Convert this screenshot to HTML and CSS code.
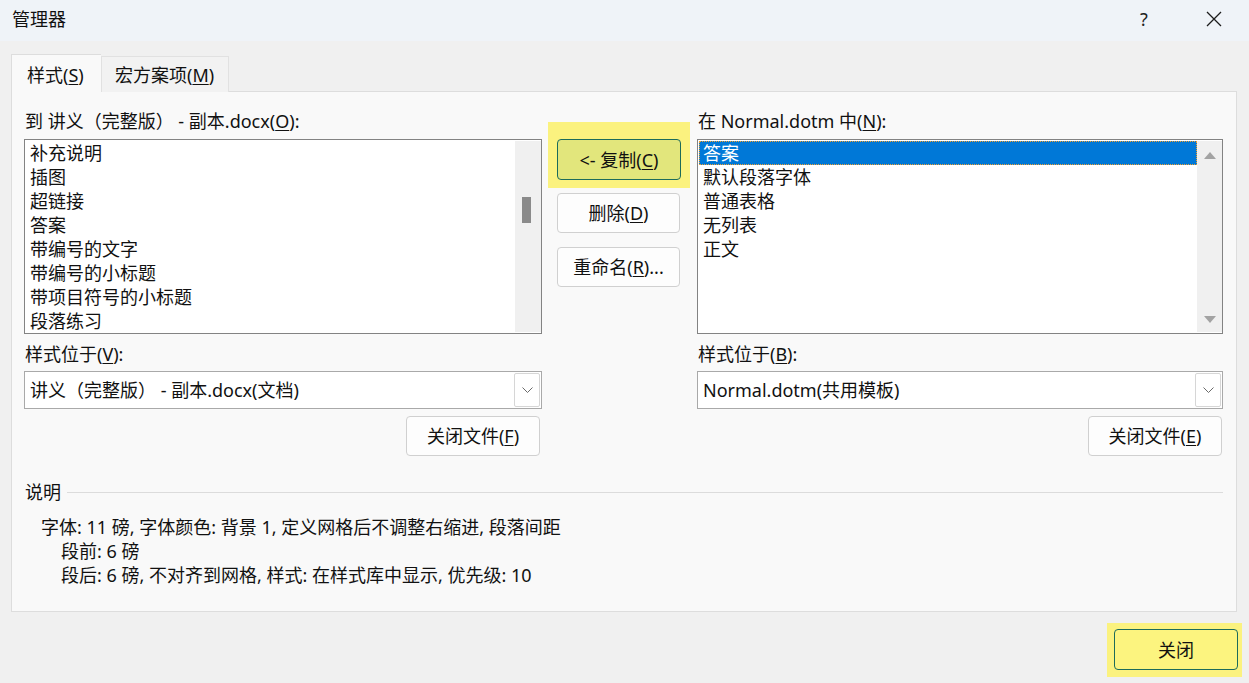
FILE: index.html
```html
<!DOCTYPE html>
<html lang="zh-CN">
<head>
  <meta charset="UTF-8" />
  <title>管理器</title>
  <link rel="stylesheet" href="styles.css">
</head>
<body>
  <div class="window">
    <!-- title bar -->
    <div class="titlebar">
      <span class="title">管理器</span>
      <span class="help">?</span>
      <span class="close-x">
        <svg width="16" height="16" viewBox="0 0 16 16"><path d="M1 1 L15 15 M15 1 L1 15" stroke="#1c1c1c" stroke-width="1.3" fill="none"/></svg>
      </span>
    </div>

    <div class="content">
      <div class="tabs">
        <div class="tab active">样式(<u>S</u>)</div>
        <div class="tab">宏方案项(<u>M</u>)</div>
      </div>

      <div class="panel">
        <div class="columns">
          <!-- left side -->
          <div class="col side-left">
            <div class="label">到 讲义（完整版） - 副本.docx(<u>O</u>):</div>
            <div class="listbox">
              <ul class="items">
                <li>补充说明</li>
                <li>插图</li>
                <li>超链接</li>
                <li>答案</li>
                <li>带编号的文字</li>
                <li>带编号的小标题</li>
                <li>带项目符号的小标题</li>
                <li>段落练习</li>
              </ul>
              <div class="vscroll">
                <div class="thumb"></div>
              </div>
            </div>
            <div class="label sub">样式位于(<u>V</u>):</div>
            <div class="combo">
              <span class="combo-text">讲义（完整版） - 副本.docx(文档)</span>
              <span class="combo-btn"><svg width="11" height="6" viewBox="0 0 11 6"><path d="M0.5 0.5 L5.5 5.5 L10.5 0.5" stroke="#6a6a6a" stroke-width="1" fill="none"/></svg></span>
            </div>
            <div class="btn-row">
              <button class="btn file-btn">关闭文件(<u>F</u>)</button>
            </div>
          </div>

          <!-- middle buttons -->
          <div class="col mid">
            <div class="hl hl-copy">
              <button class="btn marked copy-btn">&lt;- 复制(<u>C</u>)</button>
            </div>
            <button class="btn mid-btn del-btn">删除(<u>D</u>)</button>
            <button class="btn mid-btn">重命名(<u>R</u>)...</button>
          </div>

          <!-- right side -->
          <div class="col side-right">
            <div class="label">在 Normal.dotm 中(<u>N</u>):</div>
            <div class="listbox">
              <ul class="items">
                <li class="selected">答案</li>
                <li>默认段落字体</li>
                <li>普通表格</li>
                <li>无列表</li>
                <li>正文</li>
              </ul>
              <div class="vscroll arrows">
                <span class="arrow-up"></span>
                <span class="arrow-down"></span>
              </div>
            </div>
            <div class="label sub">样式位于(<u>B</u>):</div>
            <div class="combo">
              <span class="combo-text">Normal.dotm(共用模板)</span>
              <span class="combo-btn"><svg width="11" height="6" viewBox="0 0 11 6"><path d="M0.5 0.5 L5.5 5.5 L10.5 0.5" stroke="#6a6a6a" stroke-width="1" fill="none"/></svg></span>
            </div>
            <div class="btn-row">
              <button class="btn file-btn">关闭文件(<u>E</u>)</button>
            </div>
          </div>
        </div>

        <div class="desc-head">
          <span>说明</span>
          <span class="rule"></span>
        </div>
        <div class="desc">
          <div>字体: 11 磅, 字体颜色: 背景 1, 定义网格后不调整右缩进, 段落间距</div>
          <div class="indent">段前: 6 磅</div>
          <div class="indent">段后: 6 磅, 不对齐到网格, 样式: 在样式库中显示, 优先级: 10</div>
        </div>
      </div>

      <div class="footer">
        <div class="hl hl-close">
          <button class="btn marked close-btn">关闭</button>
        </div>
      </div>
    </div>
  </div>
</body>
</html>
```

FILE: styles.css
```css
* { margin: 0; padding: 0; box-sizing: border-box; }
html, body {
  background: #f0f0f0;
  font-family: "Noto Sans", "Noto Sans CJK SC", sans-serif;
  font-size: 18px;
  color: #111;
  overflow: hidden;
}
u { text-decoration: underline; text-underline-offset: 2px; text-decoration-thickness: 1px; }

.window {
  width: 1249px;
  height: 683px;
  background: #f0f0f0;
}

/* Title bar */
.titlebar {
  height: 41px;
  background: #eff3f8;
  display: flex;
  align-items: center;
  padding-left: 12px;
  line-height: 24px;
}
.title { flex: 1; margin-top: -3px; }
.help {
  width: 20px;
  text-align: center;
  margin-right: 52px;
  margin-top: -3px;
  font-size: 18px;
  color: #222;
}
.close-x {
  width: 16px;
  height: 16px;
  margin-right: 27px;
  margin-top: -3px;
  display: flex;
}

.content { padding: 13px 11px 0; }

/* Tabs */
.tabs {
  display: flex;
  align-items: flex-end;
  height: 38px;
  margin-bottom: -1px;
  position: relative;
  z-index: 1;
}
.tab {
  height: 36px;
  line-height: 36px;
  padding: 0 13px;
  width: 128px;
  border: 1px solid #e1e1e1;
  border-bottom: none;
  background: #f2f2f2;
}
.tab.active {
  height: 38px;
  line-height: 40px;
  width: 90px;
  padding: 0 15px;
  background: #f9f9f9;
  border-color: #dddddd;
  border-right: none;
}

/* Panel */
.panel {
  width: 1226px;
  height: 521px;
  background: #f9f9f9;
  border: 1px solid #dddddd;
  padding: 0 13px 0 12px;
}
.columns { display: flex; }
.col { display: flex; flex-direction: column; }
.side-left { width: 518px; padding-top: 17px; }
.side-right { width: 526px; padding-top: 17px; }
.mid { width: 123px; margin: 0 17px 0 15px; padding-top: 47px; }

.label { height: 24px; line-height: 24px; margin-left: 1px; }
.label.sub { margin-top: 8px; }

.listbox {
  margin-top: 6px;
  height: 195px;
  border: 1px solid #838383;
  background: #fff;
  display: flex;
}
.items {
  list-style: none;
  flex: 1;
  padding: 1px 0 0 1px;
  overflow: hidden;
}
.items li {
  height: 24px;
  line-height: 24px;
  padding-left: 4px;
  white-space: nowrap;
}
.items li.selected {
  background: #0078d7;
  color: #fff;
  outline: 1px dotted #f0a030;
  outline-offset: -1px;
}
.vscroll {
  width: 25px;
  margin: 1px 0;
  background: #f0f0f0;
  position: relative;
}
.side-left .vscroll { width: 26px; }
.thumb {
  position: absolute;
  left: 7px;
  top: 56px;
  width: 9px;
  height: 26px;
  background: #8a8a8a;
}
.vscroll.arrows {
  display: flex;
  flex-direction: column;
  align-items: center;
  justify-content: space-between;
  padding: 11px 0 9px;
}
.arrow-up {
  width: 0; height: 0;
  border-left: 6px solid transparent;
  border-right: 6px solid transparent;
  border-bottom: 7px solid #a3a3a3;
}
.arrow-down {
  width: 0; height: 0;
  border-left: 6px solid transparent;
  border-right: 6px solid transparent;
  border-top: 7px solid #a3a3a3;
}

/* Combo */
.combo {
  margin-top: 5px;
  height: 38px;
  border: 1px solid #a9a9a9;
  background: #fff;
  display: flex;
  align-items: center;
  padding: 1px 1px 1px 5px;
}
.combo-text { flex: 1; line-height: 24px; white-space: nowrap; }
.combo-btn {
  width: 26px;
  height: 34px;
  border: 1px solid #d6d6d6;
  border-radius: 2px;
  display: flex;
  align-items: center;
  justify-content: center;
}

/* Buttons */
.btn {
  font: inherit;
  color: inherit;
  background: #fdfdfd;
  border: 1px solid #d0d0d0;
  border-radius: 4px;
  height: 40px;
  line-height: 24px;
  cursor: default;
}
.btn-row { display: flex; justify-content: flex-end; margin-top: 7px; padding-right: 2px; }
.file-btn { width: 134px; }
.side-right .btn-row { padding-right: 1px; }
.mid-btn { width: 123px; margin-top: 14px; }
.del-btn { margin-top: 13px; }

/* yellow marking */
.hl { background: #fbf27f; }
.hl-copy {
  margin: -17px -10px -8px -9px;
  padding: 17px 10px 8px 9px;
}
.btn.marked {
  background: #e2e67c;
  border-color: #1d6b5a;
}
.copy-btn { width: 124px; height: 41px; }

/* Description */
.desc-head {
  display: flex;
  align-items: center;
  margin-top: 24px;
  height: 24px;
  line-height: 24px;
}
.desc-head span:first-child { margin-left: 1px; }
.rule {
  flex: 1;
  height: 1px;
  background: #dcdcdc;
  margin: 0 0 0 6px;
}
.desc {
  margin-top: 11px;
  padding-left: 17px;
  line-height: 24px;
}
.desc .indent { padding-left: 20px; }

/* Footer */
.footer {
  display: flex;
  justify-content: flex-end;
  padding-top: 11px;
  margin-right: -4px;
}
.hl-close { padding: 6px 4px 7px 7px; }
.close-btn {
  width: 124px;
  height: 41px;
  background: #fcf47f !important;
}
```
